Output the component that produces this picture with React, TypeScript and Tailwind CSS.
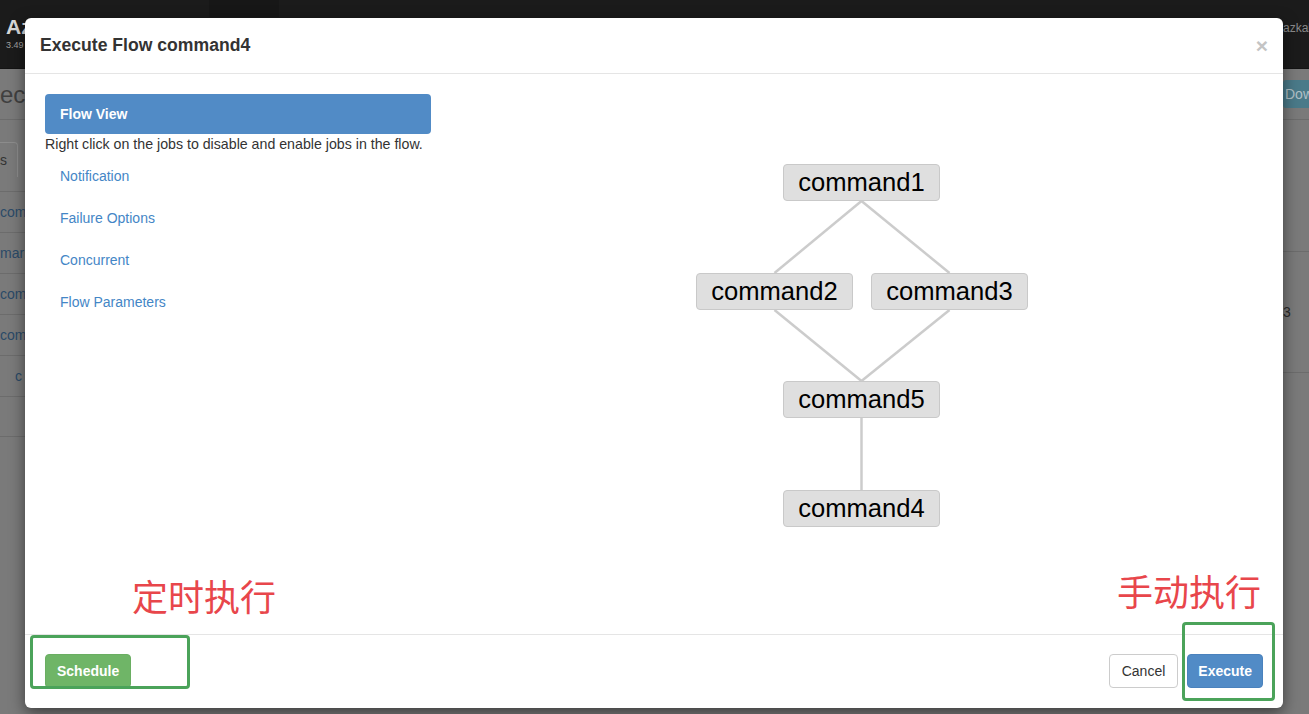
import React from "react";

const nodes = [
  { id: "command1", left: 87, top: 70 },
  { id: "command2", left: 0, top: 179 },
  { id: "command3", left: 175, top: 179 },
  { id: "command5", left: 87, top: 287 },
  { id: "command4", left: 87, top: 396 },
];

const edges = [
  [165.5, 107, 78.5, 179],
  [165.5, 107, 253.5, 179],
  [78.5, 216, 165.5, 287],
  [253.5, 216, 165.5, 287],
  [165.5, 324, 165.5, 396],
];

const links = ["Notification", "Failure Options", "Concurrent", "Flow Parameters"];

function Background() {
  return (
    <div className="flex h-full flex-col">
      {/* navbar, already dimmed by the backdrop */}
      <nav className="flex h-[69px] justify-between border-b border-[#141414] bg-[#1b1b1b]">
        <div className="flex">
          <div className="pl-[6px] pt-[15px]">
            <div className="text-[21px] font-bold leading-[24px] text-[#d8d8d8]">Az</div>
            <div className="mt-[1px] text-[9px] leading-[10px] text-[#a0a0a0]">3.49</div>
          </div>
          <div className="ml-[177px] h-[17px] w-[70px] bg-[#171717]" />
        </div>
        <div className="w-[26px] overflow-hidden pt-[19px] text-[12px] text-[#8a8a8a]">azkaban</div>
      </nav>

      <div className="flex flex-1 justify-between">
        {/* left strip */}
        <div className="w-[25px] overflow-hidden">
          <div className="h-[51px] border-b border-[#6c6c6c] pt-[12px] text-[24px] leading-[28px] text-[#404040]">
            ect
          </div>
          <div className="h-[72px] border-b border-[#6c6c6c] pt-[22px]">
            <div className="h-[35px] w-[18px] rounded-tr-[4px] border-r border-t border-[#8c8c8c] pt-[7px] text-[14px] text-[#333]">
              s
            </div>
          </div>
          {["com", "mar", "com", "com"].map((t, i) => (
            <div
              key={i}
              className="flex h-[41px] items-center border-b border-[#6c6c6c] text-[14px] text-[#2b4a68]"
            >
              {t}
            </div>
          ))}
          <div className="flex h-[41px] items-center border-b border-[#6c6c6c] pl-[15px] text-[14px] text-[#2b4a68]">
            c
          </div>
          <div className="h-[40px] border-b border-[#6c6c6c]" />
        </div>

        {/* right strip */}
        <div className="w-[26px] overflow-hidden">
          <div className="h-[51px] border-b border-[#6c6c6c] pt-[11px]">
            <div className="flex h-[28px] w-[40px] items-center rounded-l-[3px] bg-[#4a7a89] pl-[2px] text-[14px] text-[#b0c0c6]">
              Dow
            </div>
          </div>
          <div className="h-[132px] border-b border-[#6c6c6c]" />
          <div className="h-[121px] border-b border-[#6c6c6c] pt-[50px] text-[14px] text-[#2b2b2b]">3</div>
        </div>
      </div>
    </div>
  );
}

function FlowGraph() {
  return (
    <div className="relative mx-auto h-[440px] w-[332px]">
      <svg className="absolute inset-0" width="332" height="440">
        {edges.map(([x1, y1, x2, y2], i) => (
          <line key={i} x1={x1} y1={y1} x2={x2} y2={y2} stroke="#cccccc" strokeWidth="2.5" />
        ))}
      </svg>
      {nodes.map((n) => (
        <div
          key={n.id}
          className="absolute flex h-[37px] w-[157px] items-center justify-center rounded-[4px] border border-[#c9c9c9] bg-[#dfdfdf] text-[25.6px] text-black"
          style={{ left: n.left, top: n.top }}
        >
          {n.id}
        </div>
      ))}
    </div>
  );
}

export default function App() {
  return (
    <div
      className="relative h-[714px] w-[1309px] overflow-hidden bg-[#7a7a7a]"
      style={{ fontFamily: '"Liberation Sans", Arial, sans-serif' }}
    >
      <Background />

      {/* modal */}
      <div className="absolute left-[25px] top-[18px] flex h-[690px] w-[1258px] flex-col rounded-[6px] bg-white shadow-[0_5px_15px_rgba(0,0,0,0.5)]">
        <div className="flex h-[56px] items-center justify-between border-b border-[#e5e5e5] px-[15px]">
          <h4 className="text-[17.6px] font-bold text-[#333]">Execute Flow command4</h4>
          <span className="text-[21px] font-bold leading-none text-[#c4c4c4]">×</span>
        </div>

        <div className="flex h-[560px] gap-[30px] px-[20px] pt-[20px]">
          <div className="w-[386px] shrink-0">
            <div className="flex h-[40px] items-center rounded-[4px] bg-[#518bc6] px-[15px] text-[14px] font-bold text-white">
              Flow View
            </div>
            <p className="text-[14.2px] leading-[20px] text-[#333]">
              Right click on the jobs to disable and enable jobs in the flow.
            </p>
            <ul>
              {links.map((l) => (
                <li key={l} className="mt-[2px] px-[15px] py-[10px] text-[14px] leading-[20px] text-[#4486c6]">
                  {l}
                </li>
              ))}
            </ul>
          </div>
          <div className="flex-1">
            <FlowGraph />
          </div>
        </div>

        <div className="flex flex-1 items-start justify-between border-t border-[#e5e5e5] px-[20px] pt-[19px]">
          <button className="h-[34px] rounded-[4px] border border-[#6aae62] bg-[#6fb567] px-[11px] text-[14px] font-bold text-white">
            Schedule
          </button>
          <div className="flex gap-[9px]">
            <button className="h-[34px] rounded-[4px] border border-[#cccccc] bg-white px-[12px] text-[14px] text-[#333]">
              Cancel
            </button>
            <button className="h-[34px] rounded-[4px] border border-[#4a82bd] bg-[#518bc6] px-[10px] text-[14px] font-bold text-white">
              Execute
            </button>
          </div>
        </div>
      </div>

      {/* annotations drawn over the screenshot */}
      <div
        className="absolute left-[132px] top-[577px] text-[36px] leading-none text-[#e8464b]"
        style={{ fontFamily: '"Noto Sans CJK SC", sans-serif' }}
      >
        定时执行
      </div>
      <div
        className="absolute left-[1117px] top-[572px] text-[36px] leading-none text-[#e8464b]"
        style={{ fontFamily: '"Noto Sans CJK SC", sans-serif' }}
      >
        手动执行
      </div>
      <div className="absolute left-[30px] top-[635px] h-[54px] w-[160px] rounded-[4px] border-[3px] border-[#4ba35a]" />
      <div className="absolute left-[1182px] top-[622px] h-[79px] w-[93px] rounded-[4px] border-[3px] border-[#4ba35a]" />
    </div>
  );
}
